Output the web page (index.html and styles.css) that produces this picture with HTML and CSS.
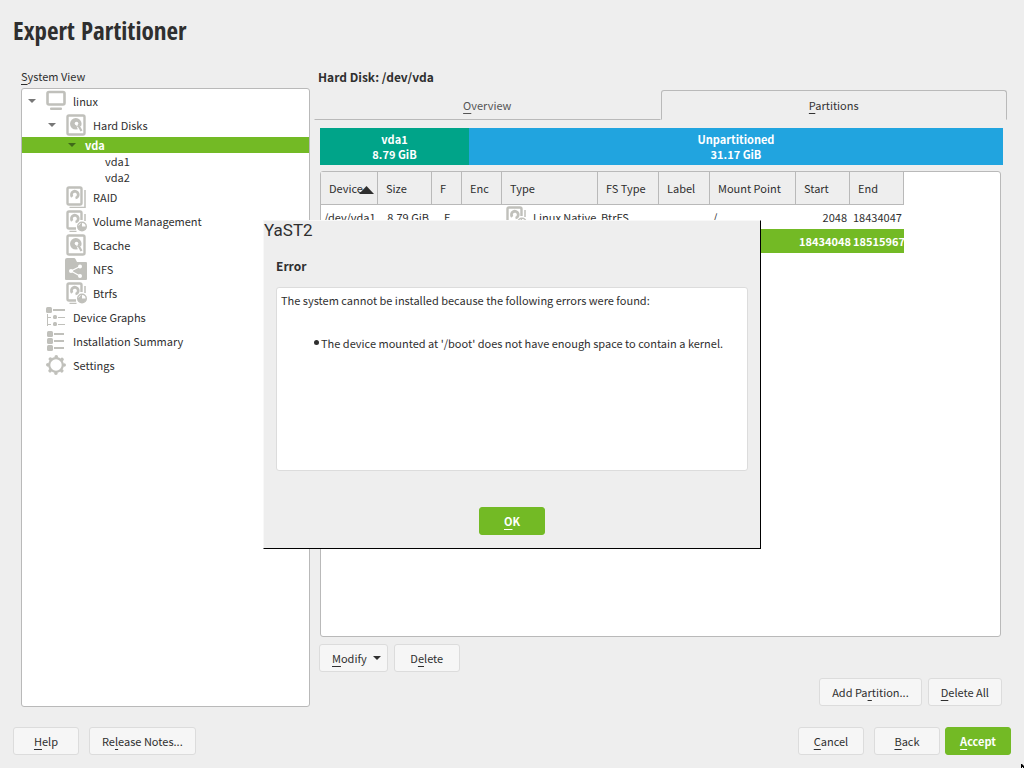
FILE: index.html
```html
<!DOCTYPE html>
<html lang="en">
<head>
<meta charset="utf-8">
<title>Expert Partitioner</title>
<link rel="stylesheet" href="styles.css">
</head>
<body>
<svg class="defs" aria-hidden="true">
  <symbol id="i-monitor" viewBox="0 0 22 22"><rect x="2.500" y="2" width="17" height="12.500" rx="1.500" fill="none" stroke="#c0c0bb" stroke-width="2.600"/><rect x="5" y="17.500" width="12" height="2.500" rx="1" fill="#c0c0bb"/></symbol>
  <symbol id="i-disk" viewBox="0 0 22 22"><rect x="2.500" y="1.500" width="17" height="19" rx="1.500" fill="none" stroke="#c0c0bb" stroke-width="2.400"/><circle cx="10.800" cy="9.800" r="5.800" fill="#c0c0bb"/><circle cx="11.500" cy="9.500" r="1.800" fill="#fff"/><path d="M11 10l6 3v6h-3z" fill="#fff"/><path d="M12.500 11.500l1.500 1 2.500 4.500" fill="none" stroke="#c0c0bb" stroke-width="2.200"/></symbol>
  <symbol id="i-raid" viewBox="0 0 22 22"><rect x="2.500" y="1.500" width="14" height="17" rx="1.500" fill="none" stroke="#c0c0bb" stroke-width="2.400"/><path d="M7.200 10.800A3.400 3.400 0 1 1 10.500 12" fill="none" stroke="#c0c0bb" stroke-width="2.800"/><path d="M20 4v17.500H4.500" fill="none" stroke="#c0c0bb" stroke-width="1.500"/></symbol>
  <symbol id="i-volume" viewBox="0 0 22 22"><path d="M11 18.500H4a1.500 1.500 0 0 1-1.500-1.500V3A1.500 1.500 0 0 1 4 1.500h11A1.500 1.500 0 0 1 16.500 3v7" fill="none" stroke="#c0c0bb" stroke-width="2.400"/><path d="M7.200 10.800A3.400 3.400 0 1 1 10.500 12" fill="none" stroke="#c0c0bb" stroke-width="2.800"/><path d="M20 4v7M4.500 21.500h7" stroke="#c0c0bb" stroke-width="1.500"/><circle cx="17" cy="16.500" r="4.300" fill="#fff" stroke="#c0c0bb" stroke-width="1.400"/><path d="M17 12.300v4.200h4.200a4.200 4.200 0 0 1-8.400 0z" fill="#c0c0bb"/></symbol>
  <symbol id="i-share" viewBox="0 0 22 22"><path d="M0 21V2Q0 0 2 0h7q1 0 1.500 1l1.500 3h9q1 0 1 1v16q0 1-1 1H1q-1 0-1-1z" fill="#c0c0bb"/><path d="M15 8.500L6 13l9 5" fill="none" stroke="#fff" stroke-width="1.200"/><circle cx="15" cy="8.500" r="2" fill="#fff"/><circle cx="6" cy="13" r="2" fill="#fff"/><circle cx="15" cy="18" r="2" fill="#fff"/></symbol>
  <symbol id="i-graph" viewBox="0 0 22 22"><g fill="#c0c0bb"><rect x="1" y="1" width="6" height="6" rx="1.500"/><rect x="8" y="3" width="12" height="2"/><rect x="2" y="8" width="1" height="12"/><rect x="3" y="11" width="3" height="1"/><rect x="3" y="18" width="3" height="1"/><rect x="8" y="9" width="4" height="4" rx="1.500"/><rect x="8" y="16" width="4" height="4" rx="1.500"/><rect x="13" y="11" width="7" height="1"/><rect x="13" y="18" width="7" height="1"/></g></symbol>
  <symbol id="i-list" viewBox="0 0 22 22"><g fill="#c0c0bb"><rect x="2" y="1" width="6" height="6" rx="1.500"/><rect x="2" y="8" width="6" height="6" rx="1.500"/><rect x="2" y="15" width="6" height="6" rx="1.500"/><rect x="9" y="3" width="10" height="2"/><rect x="9" y="10" width="10" height="2"/><rect x="9" y="17" width="10" height="2"/></g></symbol>
  <symbol id="i-gear" viewBox="0 0 22 22"><circle cx="11" cy="11" r="8.200" fill="none" stroke="#c0c0bb" stroke-width="3.600" stroke-linecap="round" stroke-dasharray="0.010 6.430"/><circle cx="11" cy="11" r="6.800" fill="none" stroke="#c0c0bb" stroke-width="2.200"/></symbol>
</svg>

<main class="wizard">
  <h1 class="title">Expert Partitioner</h1>

  <div class="content">
    <section class="sidebar">
      <h2 class="sidebar-label" id="tree-label"><u>S</u>ystem View</h2>
      <ul class="tree" role="tree" aria-labelledby="tree-label">
        <li class="node"><button class="toggle" aria-label="Collapse linux"></button><svg class="icon"><use href="#i-monitor"/></svg><span class="label">linux</span></li>
        <li class="node level-1"><button class="toggle" aria-label="Collapse Hard Disks"></button><svg class="icon"><use href="#i-disk"/></svg><span class="label">Hard Disks</span></li>
        <li class="node level-2 compact selected"><button class="toggle" aria-label="Collapse vda"></button><span class="label">vda</span></li>
        <li class="node level-3 compact"><span class="label">vda1</span></li>
        <li class="node level-3 compact"><span class="label">vda2</span></li>
        <li class="node level-1 leaf"><svg class="icon"><use href="#i-raid"/></svg><span class="label">RAID</span></li>
        <li class="node level-1 leaf"><svg class="icon"><use href="#i-volume"/></svg><span class="label">Volume Management</span></li>
        <li class="node level-1 leaf"><svg class="icon"><use href="#i-disk"/></svg><span class="label">Bcache</span></li>
        <li class="node level-1 leaf"><svg class="icon"><use href="#i-share"/></svg><span class="label">NFS</span></li>
        <li class="node level-1 leaf"><svg class="icon"><use href="#i-volume"/></svg><span class="label">Btrfs</span></li>
        <li class="node leaf"><svg class="icon"><use href="#i-graph"/></svg><span class="label">Device Graphs</span></li>
        <li class="node leaf"><svg class="icon"><use href="#i-list"/></svg><span class="label">Installation Summary</span></li>
        <li class="node leaf"><svg class="icon"><use href="#i-gear"/></svg><span class="label">Settings</span></li>
      </ul>
    </section>

    <section class="details">
      <h2 class="heading">Hard Disk: /dev/vda</h2>
      <div class="tabs" role="tablist">
        <button class="tab" role="tab"><u>O</u>verview</button>
        <button class="tab active" role="tab" aria-selected="true"><u>P</u>artitions</button>
      </div>
      <div class="panel">
        <div class="usage">
          <div class="segment used" style="flex-grow: 149"><span>vda1</span><span>8.79 GiB</span></div>
          <div class="segment free" style="flex-grow: 534"><span>Unpartitioned</span><span>31.17 GiB</span></div>
        </div>
        <div class="table-box">
          <table class="partitions">
            <colgroup><col class="c-device"><col class="c-size"><col class="c-format"><col class="c-enc"><col class="c-type"><col class="c-fs"><col class="c-label"><col class="c-mount"><col class="c-size"><col class="c-size"></colgroup>
            <thead>
              <tr><th><span class="sorted">Device<svg class="sort" viewBox="0 0 15 8"><path d="M0 8L7.500 0 15 8z" fill="#2f2f2f"/></svg></span></th><th>Size</th><th>F</th><th>Enc</th><th>Type</th><th>FS Type</th><th>Label</th><th>Mount Point</th><th>Start</th><th>End</th></tr>
            </thead>
            <tbody>
              <tr><td>/dev/vda1</td><td class="num">8.79 GiB</td><td class="flag">F</td><td></td><td><span class="with-icon"><svg class="icon"><use href="#i-volume"/></svg>Linux Native</span></td><td>BtrFS</td><td></td><td>/</td><td class="num">2048</td><td class="num">18434047</td></tr>
              <tr class="selected"><td></td><td></td><td></td><td></td><td></td><td></td><td></td><td></td><td class="num">18434048</td><td class="num">18515967</td></tr>
            </tbody>
          </table>
        </div>
        <div class="actions">
          <button class="btn menu"><span><u>M</u>odify</span><span class="caret"></span></button>
          <button class="btn"><span>D<u>e</u>lete</span></button>
        </div>
        <div class="actions end">
          <button class="btn"><span>Add Pa<u>r</u>tition...</span></button>
          <button class="btn"><span><u>D</u>elete All</span></button>
        </div>
      </div>
    </section>
  </div>

  <footer class="footer">
    <button class="btn"><span><u>H</u>elp</span></button>
    <button class="btn notes"><span>Re<u>l</u>ease Notes...</span></button>
    <button class="btn cancel"><span><u>C</u>ancel</span></button>
    <button class="btn back"><span><u>B</u>ack</span></button>
    <button class="btn primary"><span><u>A</u>ccept</span></button>
  </footer>
</main>

<dialog class="popup" open aria-labelledby="popup-title">
  <div class="popup-bar">YaST2</div>
  <div class="popup-body">
    <h2 class="popup-title" id="popup-title">Error</h2>
    <div class="message">
      <p>The system cannot be installed because the following errors were found:</p>
      <ul><li>The device mounted at '/boot' does not have enough space to contain a kernel.</li></ul>
    </div>
    <button class="btn primary"><span><u>O</u>K</span></button>
  </div>
</dialog>
<svg class="pointer" viewBox="0 0 3 4" aria-hidden="true"><path d="M0 0h1l2 2v2H2V3H1v1H0z"/></svg>
</body>
</html>
```
FILE: styles.css
```css
* { box-sizing: border-box; }

body {
  margin: 0;
  background: #eee;
  color: #2f2f2f;
  font: 11px/16px "Source Sans Pro", "Noto Sans CJK SC", "Noto Sans", sans-serif;
}

button { font: inherit; color: inherit; }
h1, h2, p, ul { margin: 0; padding: 0; }
h2 { font-size: 12px; line-height: 16px; }
ul { list-style: none; }
u { text-underline-offset: 3px; text-decoration-thickness: 1px; text-decoration-skip-ink: none; }
.defs { position: absolute; width: 0; height: 0; }

.wizard {
  display: flex;
  flex-direction: column;
  min-height: 100vh;
  padding: 13px;
}

.title {
  font: bold 25px/34px "Open Sans Condensed", "Fira Sans Condensed", "Roboto Condensed", "Noto Sans CJK SC", sans-serif;
  white-space: nowrap;
}

.content {
  display: grid;
  grid-template-columns: 289fr 693fr;
  gap: 4px;
  flex: 1;
  margin-top: 21px;
  padding: 0 4px 0 8px;
}

.sidebar, .details, .panel { display: flex; flex-direction: column; min-width: 0; }
.sidebar-label { font-size: 11px; font-weight: normal; margin-bottom: 4px; }

.tree {
  flex: 1;
  border: 1px solid #b9b9b9;
  border-radius: 3px;
  background: #fff;
}
.node { display: flex; align-items: center; height: 24px; }
.compact { height: 16px; }
.level-1 { padding-left: 20px; }
.level-2 { padding-left: 40px; }
.level-3 { padding-left: 80px; }
.leaf::before { content: ""; width: 20px; }
.toggle {
  width: 20px;
  height: 16px;
  padding: 0;
  border: 0;
  background: none;
  display: grid;
  place-items: center;
}
.toggle::before {
  content: "";
  border: 4px solid transparent;
  border-top-color: #777;
  border-bottom: 0;
}
.icon { width: 22px; height: 22px; flex: none; margin: 0 3px; }
.label { padding-left: 3px; }
.selected { background: #73ba25; color: #fff; font-weight: bold; }
.selected .toggle::before { border-top-color: #40691a; }

.heading { padding-left: 4px; margin: 1px 0 5px; }
.tabs { display: flex; }
.tab {
  flex: 1;
  height: 30px;
  padding: 0;
  border: 1px solid transparent;
  border-bottom-color: #b9b9b9;
  background: none;
  color: #555;
}
.tab.active {
  border-color: #b9b9b9;
  border-bottom-color: transparent;
  border-radius: 3px 3px 0 0;
  color: #333;
}

.panel { flex: 1; padding: 8px 4px 1px 6px; }
.usage { display: flex; }
.segment {
  flex: 0 1 0;
  display: grid;
  justify-items: center;
  align-content: center;
  height: 37px;
  line-height: 15px;
  color: #fff;
  font-weight: bold;
  white-space: nowrap;
}
.used { background: #00a489; }
.free { background: #21a4df; }

.table-box {
  flex: 1;
  margin: 6px 2px 7px 0;
  border: 1px solid #b9b9b9;
  border-radius: 3px;
  background: #fff;
}
.partitions { table-layout: fixed; width: 583px; border-collapse: separate; border-spacing: 0; white-space: nowrap; }
.c-device { width: 57px; }
.c-size { width: 54px; }
.c-format { width: 30px; }
.c-enc { width: 40px; }
.c-type { width: 96px; }
.c-fs { width: 61px; }
.c-label { width: 51px; }
.c-mount { width: 86px; }
.partitions th {
  height: 33px;
  padding: 0 0 0 8px;
  border: solid #b9b9b9;
  border-width: 0 1px 1px 0;
  background: #eee;
  font-weight: normal;
  text-align: left;
}
.sorted { display: flex; align-items: center; }
.sort { width: 15px; height: 8px; flex: none; margin: 4px 0 0 -4px; }
.partitions td { height: 24px; padding: 0 3px; }
.partitions .num { text-align: right; }
.partitions .flag { text-align: center; }
.with-icon { display: flex; align-items: center; }
.with-icon .icon { margin: 0 6px 0 0; }

.actions { display: flex; gap: 6px; margin-left: -1px; margin-bottom: 6px; }
.actions.end { justify-content: flex-end; margin: 0 1px 0 0; }
.btn {
  height: 28px;
  min-width: 66px;
  padding: 0 12px;
  border: 1px solid #dcdcdc;
  border-radius: 3px;
  background: #f6f6f6;
  white-space: nowrap;
}
.btn.primary { border-color: #73ba25; background: #73ba25; color: #fff; font-weight: bold; }
.menu { display: flex; align-items: center; gap: 6px; padding-right: 6px; }
.caret { border: 4px solid transparent; border-top-color: #2f2f2f; border-bottom: 0; }

.footer { display: flex; margin-top: 20px; }
.notes { margin-left: 10px; }
.cancel { margin-left: auto; }
.back { margin: 0 5px 0 10px; }

.popup {
  position: fixed;
  inset: 0;
  margin: auto;
  width: 498px;
  height: fit-content;
  padding: 0;
  border: 1px solid #000;
  border-top-color: #f8f8f8;
  border-left-color: #f8f8f8;
  background: #eee;
  color: inherit;
}
.popup-bar { font: 17px/18px Roboto, sans-serif; }
.popup-body { display: grid; padding: 19px 12px 13px; }
.popup-title { margin-bottom: 13px; }
.message {
  height: 184px;
  margin-bottom: 36px;
  padding: 4px;
  border: 1px solid #dcdcdc;
  border-radius: 3px;
  background: #fff;
}
.message ul { margin-top: 27px; padding-left: 40px; }
.message li { display: flex; align-items: center; }
.message li::before { content: ""; flex: none; width: 5px; height: 5px; margin: 0 2px 0 -7px; border-radius: 50%; background: #2f2f2f; }
.popup .btn { justify-self: center; }

.pointer { position: fixed; right: 0; bottom: 0; width: 3px; height: 4px; }
```
